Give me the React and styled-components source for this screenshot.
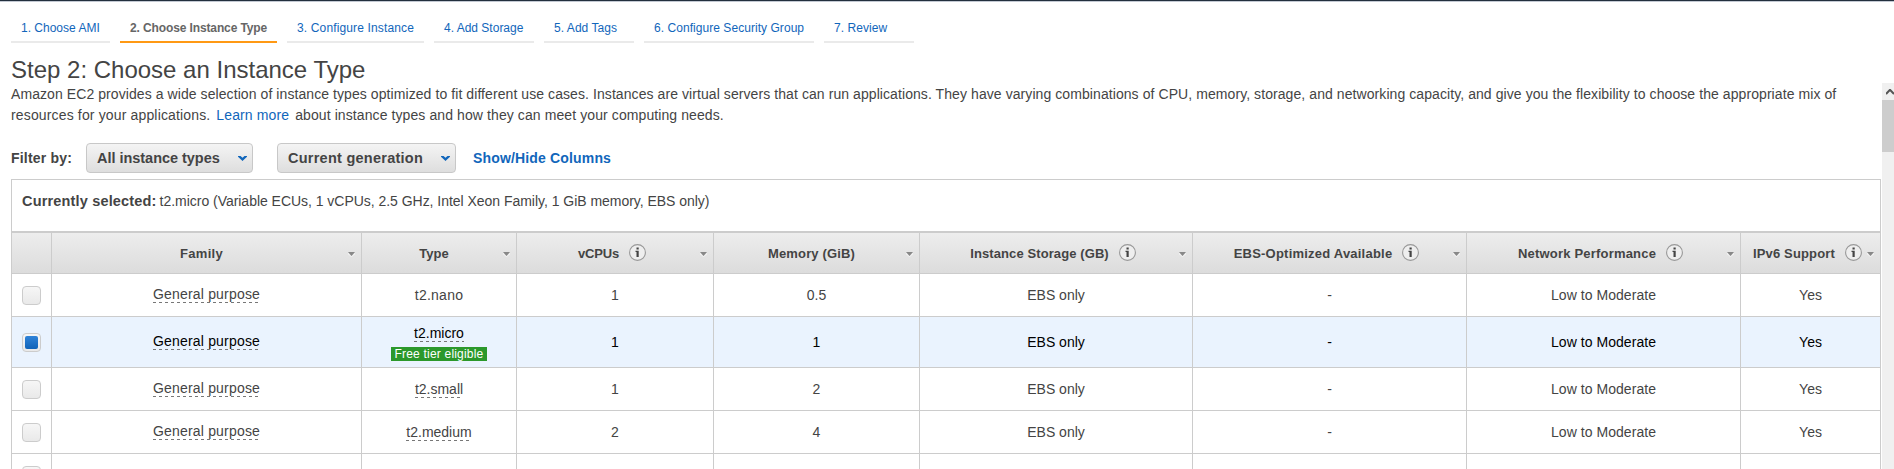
import React from 'react';
import styled, { createGlobalStyle, css } from 'styled-components';

const GlobalStyle = createGlobalStyle`
  * { box-sizing: border-box; }
  body {
    margin: 0;
    background: #fff;
    color: #444;
    font: 14px "Liberation Sans", Arial, sans-serif;
    overflow: hidden;
  }
`;

const line = '#ccc';
const link = '#1166bb';

const Page = styled.div`
  display: flex;
  flex-direction: column;
  height: 469px;
  overflow: hidden;
  border-top: 1px solid #232f3e;
`;

const WizardHeader = styled.header`
  flex: none;
  height: 82px;
  padding-left: 11px;
  border-top: 1px solid #c3c9d3;
`;

const Steps = styled.nav`
  display: flex;
  gap: 10px;
  padding-top: 14px;
`;

const Step = styled.a`
  width: ${(p) => p.$width}px;
  height: 27px;
  padding-left: 10px;
  border-bottom: 2px solid ${(p) => (p.$active ? '#ff9914' : '#eaeaea')};
  color: ${(p) => (p.$active ? '#666' : link)};
  font-size: 12px;
  font-weight: ${(p) => (p.$active ? 'bold' : 'normal')};
  letter-spacing: ${(p) => p.$track || 0}px;
  line-height: 24px;
  white-space: nowrap;
`;

const Title = styled.h1`
  margin: 14px 0 0;
  font-size: 24px;
  font-weight: normal;
  line-height: 26px;
`;

const Body = styled.div`
  display: flex;
  flex: 1;
  min-height: 0;
`;

const Content = styled.main`
  flex: none;
  width: 1882px;
  padding: 1px 1px 0 11px;
  overflow: hidden;
`;

const Description = styled.div`
  line-height: 21px;
  white-space: nowrap;
`;

const Text = styled.span`
  letter-spacing: ${(p) => p.$track || 0}px;
  white-space: nowrap;
`;

const DescriptionLine = styled.div`
  display: flex;
  letter-spacing: ${(p) => p.$track || 0}px;
`;

const LearnMore = styled.a`
  margin: 0 6px 0 6px;
  color: ${link};
  letter-spacing: 0.12px;
`;

const Filters = styled.div`
  display: flex;
  align-items: center;
  height: 30px;
  margin: 17px 0 6px;
  font-weight: bold;
`;

const FilterLabel = styled.span`
  width: 75px;
  letter-spacing: 0.2px;
`;

const Dropdown = styled.button`
  display: flex;
  align-items: center;
  justify-content: space-between;
  width: ${(p) => p.$width}px;
  height: 30px;
  margin: 0 ${(p) => p.$after}px 0 0;
  padding: 0 5px 0 10px;
  border: 1px solid #c8c8c8;
  border-radius: 4px;
  background: linear-gradient(#f4f4f4, #dedede);
  color: #444;
  font: bold 14.5px "Liberation Sans", Arial, sans-serif;
  letter-spacing: ${(p) => p.$track}px;
`;

const ColumnsLink = styled.a`
  color: ${link};
  letter-spacing: 0.16px;
`;

const Table = styled.section`
  width: 1870px;
  border: 1px solid ${line};
  border-bottom: 0;
`;

const Selection = styled.div`
  display: flex;
  align-items: baseline;
  gap: 3px;
  height: 53px;
  padding: 13px 10px 0;
  border-bottom: 2px solid ${line};
  line-height: 16px;
`;

const Strong = styled.strong`
  font-size: 14.5px;
  letter-spacing: 0.17px;
`;

const columns = css`
  display: grid;
  grid-template-columns: 40px 310px 155px 197px 206px 273px 274px 274px 139px;
  border-bottom: 1px solid ${line};
`;

const HeadRow = styled.div`
  ${columns}
  height: 41px;
  background: linear-gradient(#ededed, #dcdcdc);
`;

const HeadCell = styled.div`
  display: grid;
  align-items: center;
  border-right: 1px solid ${line};
  font-size: 13px;
  font-weight: bold;
  &:last-child { border-right: 0; }
  > * { grid-area: 1 / 1; }
`;

const HeadLabel = styled.div`
  display: flex;
  align-items: center;
  justify-content: center;
  gap: 10px;
  padding-right: ${(p) => (p.$info ? 6 : 10)}px;
`;

const SortArrow = styled.svg`
  justify-self: end;
  margin: 2px 6px 0 0;
`;

const InfoSvg = styled.svg`
  flex: none;
  margin-top: -1px;
`;

const Row = styled.div`
  ${columns}
  height: ${(p) => (p.$selected ? 51 : 43)}px;
  background: ${(p) => (p.$selected ? '#eaf3fe' : '#fff')};
  color: ${(p) => (p.$selected ? '#000' : '#444')};
`;

const Cell = styled.div`
  display: flex;
  flex-direction: column;
  align-items: center;
  justify-content: center;
  padding-bottom: ${(p) => p.$lift || 0}px;
  border-right: 1px solid ${line};
  &:last-child { border-right: 0; }
`;

const Term = styled.span`
  height: 17px;
  background: ${(p) => (p.$plain
    ? 'none'
    : 'repeating-linear-gradient(90deg, #777 0 3px, transparent 3px 6px) 0 100% / 100% 1px no-repeat')};
  line-height: 16px;
  letter-spacing: ${(p) => p.$track || 0}px;
  white-space: nowrap;
`;

const Badge = styled.span`
  width: 96px;
  height: 14px;
  margin: 5px 0 -2px;
  background: #2b982b;
  color: #fff;
  font-size: 12px;
  line-height: 14px;
  letter-spacing: 0.2px;
  text-align: center;
  white-space: nowrap;
`;

const Check = styled.span`
  display: flex;
  align-items: center;
  justify-content: center;
  width: 19px;
  height: 19px;
  border: 1px solid ${line};
  border-radius: 4px;
  background: linear-gradient(#f6f6f6, #e9e9e9);
`;

const CheckFill = styled.span`
  width: 13px;
  height: 13px;
  border-radius: 2px;
  background: linear-gradient(#2f83d8, #1163b8);
`;

const Scrollbar = styled.aside`
  width: 12px;
  background: #f0f0f0;
`;

const ScrollUp = styled.div`
  height: 17px;
  padding: 6px 0 0 4px;
  overflow: hidden;
  line-height: 0;
`;

const Thumb = styled.div`
  height: 52px;
  background: #cdcdcd;
`;

const Chevron = () => (
  <svg width="9" height="5" viewBox="0 0 9 5">
    <path d="M0 0H2.5L4.5 1.8L6.5 0H9V0.8L4.5 5L0 0.8Z" fill={link} />
  </svg>
);

const InfoIcon = () => (
  <InfoSvg width="17" height="17" viewBox="0 0 17 17">
    <circle cx="8.5" cy="8.5" r="7.9" fill="#eee" stroke="#999" strokeWidth="1.1" />
    <path d="M7.5 3.5H9.7V5.5H7.5ZM6.5 6.8H9.7V13H7.5V8H6.5Z" fill="#444" />
  </InfoSvg>
);

const Sort = () => (
  <SortArrow width="7" height="6" viewBox="0 0 7 6">
    <path d="M0 2L3.5 5.5L7 2V3L3.5 6L0 3Z" fill="#fff" />
    <path d="M0 1H7L3.5 5Z" fill="#888" />
  </SortArrow>
);

const steps = [
  ['1. Choose AMI', 99, 0],
  ['2. Choose Instance Type', 157, -0.12],
  ['3. Configure Instance', 137, 0.14],
  ['4. Add Storage', 100, 0],
  ['5. Add Tags', 90, 0.05],
  ['6. Configure Security Group', 170, 0.05],
  ['7. Review', 90, 0.05],
];

const headers = [
  ['Family', false, 0.3],
  ['Type', false, 0],
  ['vCPUs', true, -0.2],
  ['Memory (GiB)', false, 0.15],
  ['Instance Storage (GB)', true, 0.1],
  ['EBS-Optimized Available', true, 0.22],
  ['Network Performance', true, 0.2],
  ['IPv6 Support', true, 0.15],
];

const rows = [
  { type: 't2.nano', track: 0.25, plain: true, cpus: '1', memory: '0.5' },
  { type: 't2.micro', selected: true, cpus: '1', memory: '1' },
  { type: 't2.small', cpus: '1', memory: '2' },
  { type: 't2.medium', cpus: '2', memory: '4' },
];

function InstanceRow({ row }) {
  return (
    <Row $selected={row.selected}>
      <Cell><Check>{row.selected && <CheckFill />}</Check></Cell>
      <Cell $lift={2}><Term $track={0.19}>General purpose</Term></Cell>
      <Cell>
        <Term $plain={row.plain} $track={row.track}>{row.type}</Term>
        {row.selected && <Badge>Free tier eligible</Badge>}
      </Cell>
      <Cell>{row.cpus}</Cell>
      <Cell>{row.memory}</Cell>
      <Cell>EBS only</Cell>
      <Cell>-</Cell>
      <Cell><Text $track={0.05}>Low to Moderate</Text></Cell>
      <Cell>Yes</Cell>
    </Row>
  );
}

export default function App() {
  return (
    <Page>
      <GlobalStyle />
      <WizardHeader>
        <Steps>
          {steps.map(([label, width, track], i) => (
            <Step key={label} $width={width} $track={track} $active={i === 1}>{label}</Step>
          ))}
        </Steps>
        <Title>Step 2: Choose an Instance Type</Title>
      </WizardHeader>
      <Body>
        <Content>
          <Description>
            <DescriptionLine $track={0.077}>
              Amazon EC2 provides a wide selection of instance types optimized to fit different use cases. Instances are virtual servers that can run applications. They have varying combinations of CPU, memory, storage, and networking capacity, and give you the flexibility to choose the appropriate mix of
            </DescriptionLine>
            <DescriptionLine $track={0.12}>
              <Text $track={0.15}>resources for your applications.</Text>
              <LearnMore>Learn more</LearnMore>
              <Text $track={0.095}>about instance types and how they can meet your computing needs.</Text>
            </DescriptionLine>
          </Description>
          <Filters>
            <FilterLabel>Filter by:</FilterLabel>
            <Dropdown $width={167} $after={24} $track={-0.03}>All instance types<Chevron /></Dropdown>
            <Dropdown $width={179} $after={17} $track={0.25}>Current generation<Chevron /></Dropdown>
            <ColumnsLink>Show/Hide Columns</ColumnsLink>
          </Filters>
          <Table>
            <Selection>
              <Strong>Currently selected:</Strong>
              <Text $track={-0.03}>t2.micro (Variable ECUs, 1 vCPUs, 2.5 GHz, Intel Xeon Family, 1 GiB memory, EBS only)</Text>
            </Selection>
            <HeadRow>
              <HeadCell />
              {headers.map(([label, info, track]) => (
                <HeadCell key={label}>
                  <HeadLabel $info={info}>
                    <Text $track={track}>{label}</Text>
                    {info && <InfoIcon />}
                  </HeadLabel>
                  <Sort />
                </HeadCell>
              ))}
            </HeadRow>
            {rows.map((row) => <InstanceRow key={row.type} row={row} />)}
            <Row>
              <Cell><Check /></Cell>
              {headers.map(([label]) => <Cell key={label} />)}
            </Row>
          </Table>
        </Content>
        <Scrollbar>
          <ScrollUp>
            <svg width="8" height="7" viewBox="0 0 8 7">
              <path d="M0 5L4 0.8L8 5" fill="none" stroke="#555" strokeWidth="2" />
            </svg>
          </ScrollUp>
          <Thumb />
        </Scrollbar>
      </Body>
    </Page>
  );
}
